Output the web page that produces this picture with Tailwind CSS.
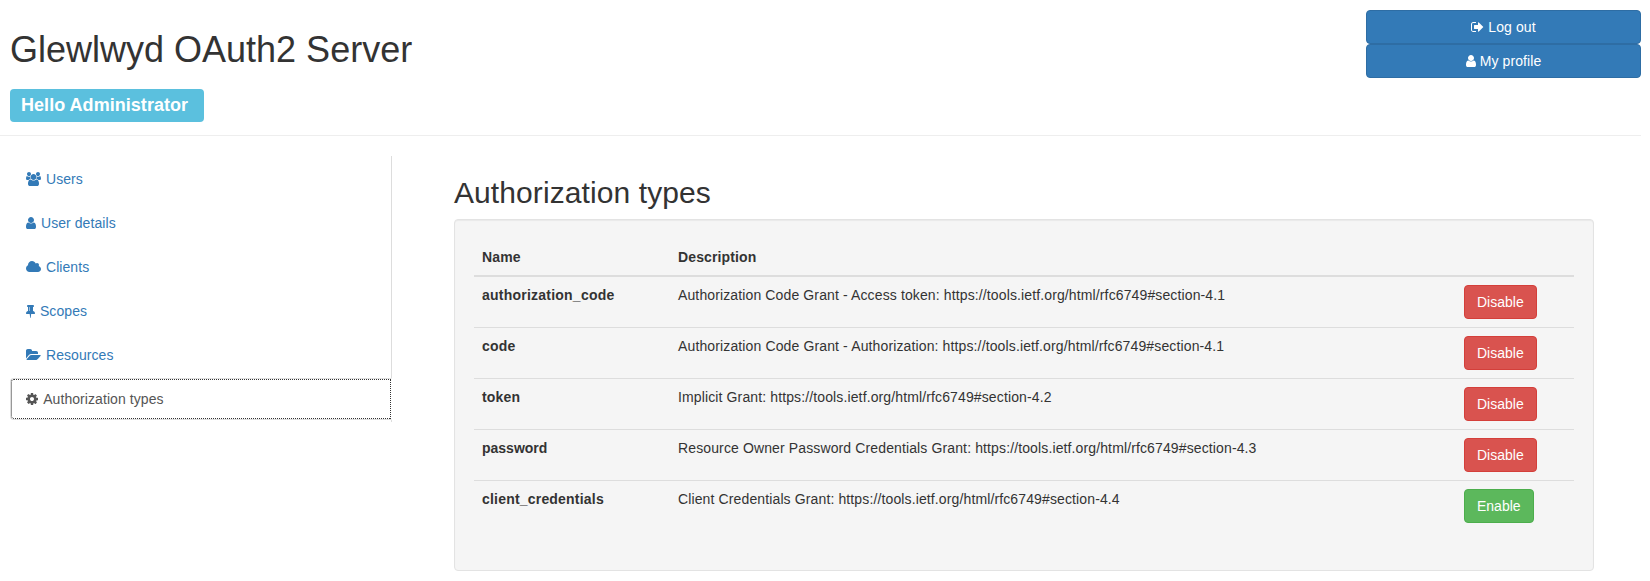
<!DOCTYPE html>
<html lang="en">
<head>
<meta charset="utf-8">
<title>Glewlwyd OAuth2 Server</title>
<script src="https://cdn.jsdelivr.net/npm/@tailwindcss/browser@4"></script>
</head>
<body class="h-[581px] overflow-hidden bg-white font-['Liberation_Sans',Arial,sans-serif] text-[14px] leading-5 text-[#333]">
<svg class="hidden">
  <symbol id="user" viewBox="256 0 1280 1792"><path d="M1536 1399q0 109-62.5 187t-150.5 78h-854q-88 0-150.5-78t-62.5-187q0-85 8.5-160.5t31.5-152 58.5-131 94-89 134.5-34.5q131 128 313 128t313-128q76 0 134.5 34.5t94 89 58.5 131 31.5 152 8.5 160.5zm-256-887q0 159-112.5 271.5t-271.5 112.5-271.5-112.5-112.5-271.5 112.5-271.5 271.5-112.5 271.5 112.5 112.5 271.5z"/></symbol>
</svg>
<header class="mr-[9px] flex h-[136px] justify-between border-b border-[#eee] pt-[10px] pl-[10px]">
  <div>
    <h1 class="mt-5 text-[36px] leading-[39px]">Glewlwyd OAuth2 Server</h1>
    <div class="mt-5 flex h-[33px] w-[194px] items-center rounded bg-[#5bc0de] pb-[2px] pl-[11px] text-[18px] font-bold tracking-[0.04px] text-white">Hello Administrator</div>
  </div>
  <div class="w-[275px]">
    <button class="block h-[34px] w-full rounded border border-[#2e6da4] bg-[#337ab7] tracking-[0.1px] text-white"><svg class="inline-block h-[14px] w-[13px] align-[-2px]" fill="currentColor" viewBox="64 0 1664 1792"><path d="M704 1440q0 4 1 20t.5 26.5-3 23.5-10 19.5-20.5 6.5h-320q-119 0-203.5-84.5t-84.5-203.5v-704q0-119 84.5-203.5t203.5-84.5h320q13 0 22.5 9.5t9.5 22.5q0 4 1 20t.5 26.5-3 23.5-10 19.5-20.5 6.5h-320q-66 0-113 47t-47 113v704q0 66 47 113t113 47h312l11.5 1 11.5 3 8 5.5 7 9 2 13.5zm928-544q0 26-19 45l-544 544q-19 19-45 19t-45-19-19-45v-288h-448q-26 0-45-19t-19-45v-384q0-26 19-45t45-19h448v-288q0-26 19-45t45-19 45 19l544 544q19 19 19 45z"/></svg> Log out</button>
    <button class="block h-[34px] w-full rounded border border-[#2e6da4] bg-[#337ab7] tracking-[0.1px] text-white"><svg class="inline-block h-[14px] w-[10px] align-[-2px]" fill="currentColor"><use href="#user"/></svg> My profile</button>
  </div>
</header>
<div class="flex pt-5 pl-[10px]">
  <nav class="flex h-[266px] w-[382px] flex-col gap-[2px] border-r border-[#ddd] pt-[2px] tracking-[0.07px] text-[#337ab7]">
    <a class="h-[42px] px-4 py-[11px]"><svg class="mr-px inline-block h-[14px] w-[15px] align-[-2px]" fill="currentColor" viewBox="-64 0 1920 1792"><path d="M529 896q-162 5-265 128h-134q-82 0-138-40.5t-56-118.5q0-353 124-353 6 0 43.5 21t97.5 42.5 119 21.5q67 0 133-23-5 37-5 66 0 139 81 256zm1071 637q0 120-73 189.5t-194 69.5h-874q-121 0-194-69.5t-73-189.5q0-53 3.5-103.5t14-109 26.5-108.5 43-97.5 62-81 85.5-53.5 111.5-20q10 0 43 21.5t73 48 107 48 135 21.5 135-21.5 107-48 73-48 43-21.5q61 0 111.5 20t85.5 53.5 62 81 43 97.5 26.5 108.5 14 109 3.5 103.5zm-1024-1277q0 106-75 181t-181 75-181-75-75-181 75-181 181-75 181 75 75 181zm704 384q0 159-112.5 271.5t-271.5 112.5-271.5-112.5-112.5-271.5 112.5-271.5 271.5-112.5 271.5 112.5 112.5 271.5zm576 225q0 78-56 118.5t-138 40.5h-134q-103-123-265-128 81-117 81-256 0-29-5-66 66 23 133 23 59 0 119-21.5t97.5-42.5 43.5-21q124 0 124 353zm-128-609q0 106-75 181t-181 75-181-75-75-181 75-181 181-75 181 75 75 181z"/></svg> Users</a>
    <a class="h-[42px] px-4 py-[11px]"><svg class="mr-px inline-block h-[14px] w-[10px] align-[-2px]" fill="currentColor"><use href="#user"/></svg> User details</a>
    <a class="h-[42px] px-4 py-[11px]"><svg class="mr-px inline-block h-[14px] w-[15px] align-[-2px]" fill="currentColor" viewBox="-64 0 1920 1792"><path d="M1856 1152q0 159-112.5 271.5t-271.5 112.5h-1088q-185 0-316.5-131.5t-131.5-316.5q0-132 71-241.5t187-163.5q-2-28-2-43 0-212 150-362t362-150q158 0 286.5 88t187.5 230q70-62 166-62 106 0 181 75t75 181q0 75-41 138 129 30 213 134.5t84 239.5z"/></svg> Clients</a>
    <a class="h-[42px] px-4 py-[11px]"><svg class="mr-px inline-block h-[14px] w-[9px] align-[-2px]" fill="currentColor" viewBox="320 0 1152 1792"><path d="M800 864v-448q0-14-9-23t-23-9-23 9-9 23v448q0 14 9 23t23 9 23-9 9-23zm672 352q0 26-19 45t-45 19h-429l-51 483q-2 12-10.5 20.5t-20.5 8.5h-1q-27 0-32-27l-76-485h-404q-26 0-45-19t-19-45q0-123 78.5-221.5t177.5-98.5v-512q-52 0-90-38t-38-90 38-90 90-38h640q52 0 90 38t38 90-38 90-90 38v512q99 0 177.5 98.5t78.5 221.5z"/></svg> Scopes</a>
    <a class="h-[42px] px-4 py-[11px]"><svg class="mr-px inline-block h-[14px] w-[15px] align-[-2px]" fill="currentColor" viewBox="0 0 1920 1792"><path d="M1879 952q0 31-31 66l-336 396q-43 51-120.5 86.5t-143.5 35.5h-1088q-34 0-60.5-13t-26.5-43q0-31 31-66l336-396q43-51 120.5-86.5t143.5-35.5h1088q34 0 60.5 13t26.5 43zm-343-344v160h-832q-94 0-197 47.5t-164 119.5l-337 396-5 6q0-4-.5-12.5t-.5-12.5v-960q0-92 66-158t158-66h320q92 0 158 66t66 158v32h544q92 0 158 66t66 158z"/></svg> Resources</a>
    <a class="-mr-px h-[42px] rounded-l border border-[#ddd] border-r-white bg-white px-[15px] py-[10px] text-[#555] outline-1 -outline-offset-2 outline-dotted outline-[#333]"><svg class="mr-[2px] inline-block h-[14px] w-[12px] align-[-2px]" fill="currentColor" viewBox="128 0 1536 1792"><path d="M1152 896q0-106-75-181t-181-75-181 75-75 181 75 181 181 75 181-75 75-181zm512-109v222q0 12-8 23t-20 13l-185 28q-19 54-39 91 35 50 107 138 10 12 10 25t-9 23q-27 37-99 108t-94 71q-12 0-26-9l-138-108q-44 23-91 38-16 136-29 186-7 28-36 28h-222q-14 0-24.5-8.5t-11.5-21.5l-28-184q-49-16-90-37l-141 107q-10 9-25 9-14 0-25-11-126-114-165-168-7-10-7-23 0-12 8-23 15-21 51-66.5t54-70.5q-27-50-41-99l-183-27q-13-2-21-12.5t-8-23.5v-222q0-12 8-23t19-13l186-28q14-46 39-92-40-57-107-138-10-12-10-24 0-10 9-23 26-36 98.5-107.5t94.5-71.5q13 0 26 10l138 107q44-23 91-38 16-136 29-186 7-28 36-28h222q14 0 24.5 8.5t11.5 21.5l28 184q49 16 90 37l142-107q9-9 24-9 13 0 25 10 129 119 165 170 7 8 7 22 0 12-8 23-15 21-51 66.5t-54 70.5q26 50 41 98l183 28q13 2 21 12.5t8 23.5z"/></svg> Authorization types</a>
  </nav>
  <main class="ml-[62px] w-[1140px] pt-5">
    <h2 class="mb-[10px] text-[30px] leading-[33px] tracking-[0.09px]">Authorization types</h2>
    <div class="h-[352px] rounded border border-[#e3e3e3] bg-[#f5f5f5] p-[19px] shadow-[inset_0_1px_1px_rgba(0,0,0,0.05)]">
      <table class="w-full table-fixed border-collapse text-left align-top">
        <colgroup><col class="w-[196px]"><col class="w-[786px]"><col></colgroup>
        <thead><tr class="h-[37px] border-b-2 border-[#ddd] tracking-[0.12px]"><th class="px-2 py-0">Name</th><th class="px-2 py-0">Description</th><th></th></tr></thead>
        <tbody class="align-top">
          <tr class="h-[51px]"><th class="px-2 pt-2 tracking-[0.23px]">authorization_code</th><td class="px-2 pt-2 tracking-[0.125px]">Authorization Code Grant - Access token: https://tools.ietf.org/html/rfc6749#section-4.1</td><td class="p-2"><button class="block h-[34px] rounded border border-[#d43f3a] bg-[#d9534f] px-3 text-white">Disable</button></td></tr>
          <tr class="h-[51px] border-t border-[#ddd]"><th class="px-2 pt-2 tracking-[0.2px]">code</th><td class="px-2 pt-2 tracking-[0.13px]">Authorization Code Grant - Authorization: https://tools.ietf.org/html/rfc6749#section-4.1</td><td class="p-2"><button class="block h-[34px] rounded border border-[#d43f3a] bg-[#d9534f] px-3 text-white">Disable</button></td></tr>
          <tr class="h-[51px] border-t border-[#ddd]"><th class="px-2 pt-2 tracking-[0.2px]">token</th><td class="px-2 pt-2 tracking-[0.125px]">Implicit Grant: https://tools.ietf.org/html/rfc6749#section-4.2</td><td class="p-2"><button class="block h-[34px] rounded border border-[#d43f3a] bg-[#d9534f] px-3 text-white">Disable</button></td></tr>
          <tr class="h-[51px] border-t border-[#ddd]"><th class="px-2 pt-2">password</th><td class="px-2 pt-2 tracking-[0.125px]">Resource Owner Password Credentials Grant: https://tools.ietf.org/html/rfc6749#section-4.3</td><td class="p-2"><button class="block h-[34px] rounded border border-[#d43f3a] bg-[#d9534f] px-3 text-white">Disable</button></td></tr>
          <tr class="h-[51px] border-t border-[#ddd]"><th class="px-2 pt-2 tracking-[0.2px]">client_credentials</th><td class="px-2 pt-2 tracking-[0.125px]">Client Credentials Grant: https://tools.ietf.org/html/rfc6749#section-4.4</td><td class="p-2"><button class="block h-[34px] rounded border border-[#4cae4c] bg-[#5cb85c] px-3 text-white">Enable</button></td></tr>
        </tbody>
      </table>
    </div>
  </main>
</div>
</body>
</html>
